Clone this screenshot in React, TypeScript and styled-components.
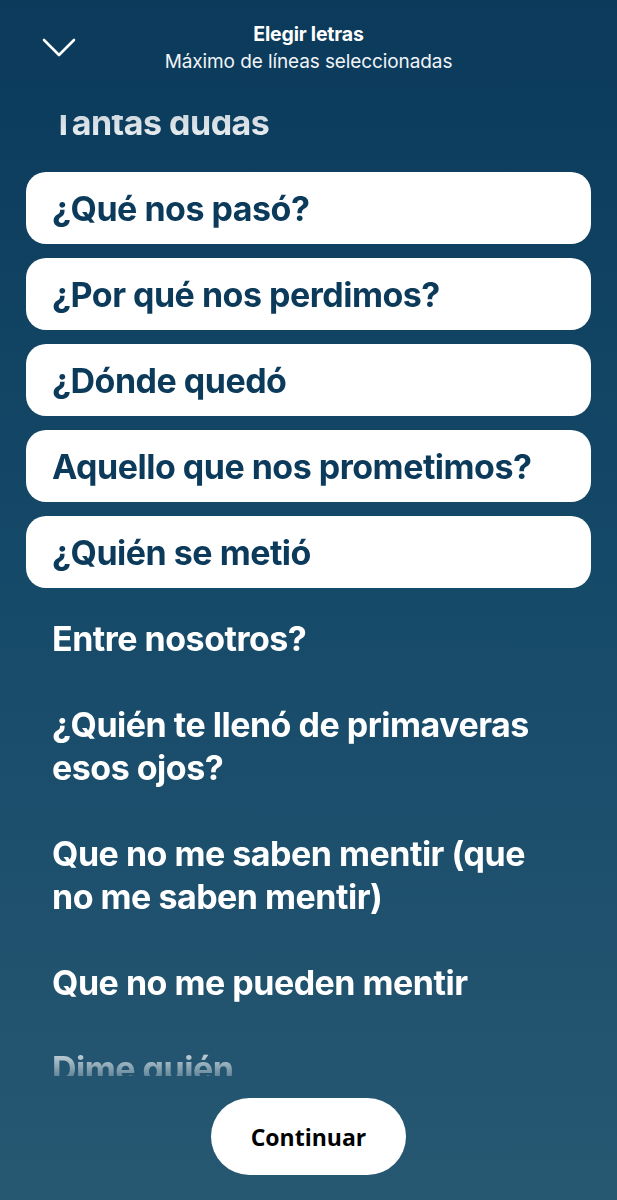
import React from "react";
import styled, { createGlobalStyle } from "styled-components";

const Global = createGlobalStyle`
  html, body { margin: 0; padding: 0; }
  body {
    width: 617px;
    height: 1200px;
    overflow: hidden;
    font-family: Inter, "Noto Sans", sans-serif;
  }
`;

const Screen = styled.div`
  width: 617px;
  height: 1200px;
  background: linear-gradient(180deg, #0b3a5b 0%, #164a69 50%, #275872 100%);
  display: flex;
  flex-direction: column;
  color: #fff;
  overflow: hidden;
`;

const Header = styled.header`
  display: grid;
  grid-template-columns: 100px 1fr 100px;
  align-items: center;
  height: 96px;
`;

const BackButton = styled.button`
  background: none;
  border: none;
  padding: 0 0 0 42px;
  display: flex;
  align-items: center;
  height: 40px;
  cursor: pointer;
`;

const Titles = styled.div`
  display: flex;
  flex-direction: column;
  align-items: center;
`;

const Title = styled.div`
  font-size: 19.5px;
  font-weight: 700;
  letter-spacing: -0.2px;
  line-height: 28px;
`;

const Subtitle = styled.div`
  font-size: 19px;
  font-weight: 400;
  letter-spacing: -0.1px;
  line-height: 28px;
  color: #f1f4f7;
  white-space: nowrap;
`;

const Viewport = styled.div`
  height: 961px;
  margin-top: 19px;
  overflow: hidden;
  -webkit-mask-image: linear-gradient(
    180deg,
    rgba(0, 0, 0, 0.8) 0px,
    #000 40px,
    #000 925px,
    rgba(0, 0, 0, 0.3) 961px
  );
  mask-image: linear-gradient(
    180deg,
    rgba(0, 0, 0, 0.8) 0px,
    #000 40px,
    #000 925px,
    rgba(0, 0, 0, 0.3) 961px
  );
`;

const List = styled.ul`
  list-style: none;
  margin: -29px 0 0;
  padding: 0 26px;
  display: flex;
  flex-direction: column;
  gap: 14px;
`;

const Line = styled.li<{ $selected?: boolean }>`
  padding: 14.5px 18px 14.5px 26px;
  border-radius: 20px;
  background: ${(p) => (p.$selected ? "#ffffff" : "transparent")};
  color: ${(p) => (p.$selected ? "#0c3a5b" : "#ffffff")};
  font-size: 34px;
  font-weight: 700;
  line-height: 43px;
  letter-spacing: -0.5px;
`;

const Footer = styled.div`
  flex: 1;
  display: flex;
  justify-content: center;
  align-items: flex-start;
  padding-top: 22px;
`;

const ContinueButton = styled.button`
  width: 195px;
  height: 77px;
  border: none;
  border-radius: 39px;
  background: #ffffff;
  color: #000;
  font-family: "Open Sans", "Noto Sans", sans-serif;
  font-weight: 700;
  font-size: 23px;
  cursor: pointer;
`;

const lines: { text: string; selected?: boolean }[] = [
  { text: "Tantas dudas" },
  { text: "¿Qué nos pasó?", selected: true },
  { text: "¿Por qué nos perdimos?", selected: true },
  { text: "¿Dónde quedó", selected: true },
  { text: "Aquello que nos prometimos?", selected: true },
  { text: "¿Quién se metió", selected: true },
  { text: "Entre nosotros?" },
  { text: "¿Quién te llenó de primaveras esos ojos?" },
  { text: "Que no me saben mentir (que no me saben mentir)" },
  { text: "Que no me pueden mentir" },
  { text: "Dime quién" },
];

export default function App() {
  return (
    <>
      <Global />
      <Screen>
        <Header>
          <BackButton aria-label="Cerrar">
            <svg width="34" height="20" viewBox="0 0 34 20" fill="none">
              <path
                d="M2 2 L17 17 L32 2"
                stroke="#fff"
                strokeWidth="2.6"
                strokeLinecap="round"
                strokeLinejoin="round"
              />
            </svg>
          </BackButton>
          <Titles>
            <Title>Elegir letras</Title>
            <Subtitle>Máximo de líneas seleccionadas</Subtitle>
          </Titles>
          <div />
        </Header>
        <Viewport>
          <List>
            {lines.map((l, i) => (
              <Line key={i} $selected={l.selected}>
                {l.text}
              </Line>
            ))}
          </List>
        </Viewport>
        <Footer>
          <ContinueButton>Continuar</ContinueButton>
        </Footer>
      </Screen>
    </>
  );
}
